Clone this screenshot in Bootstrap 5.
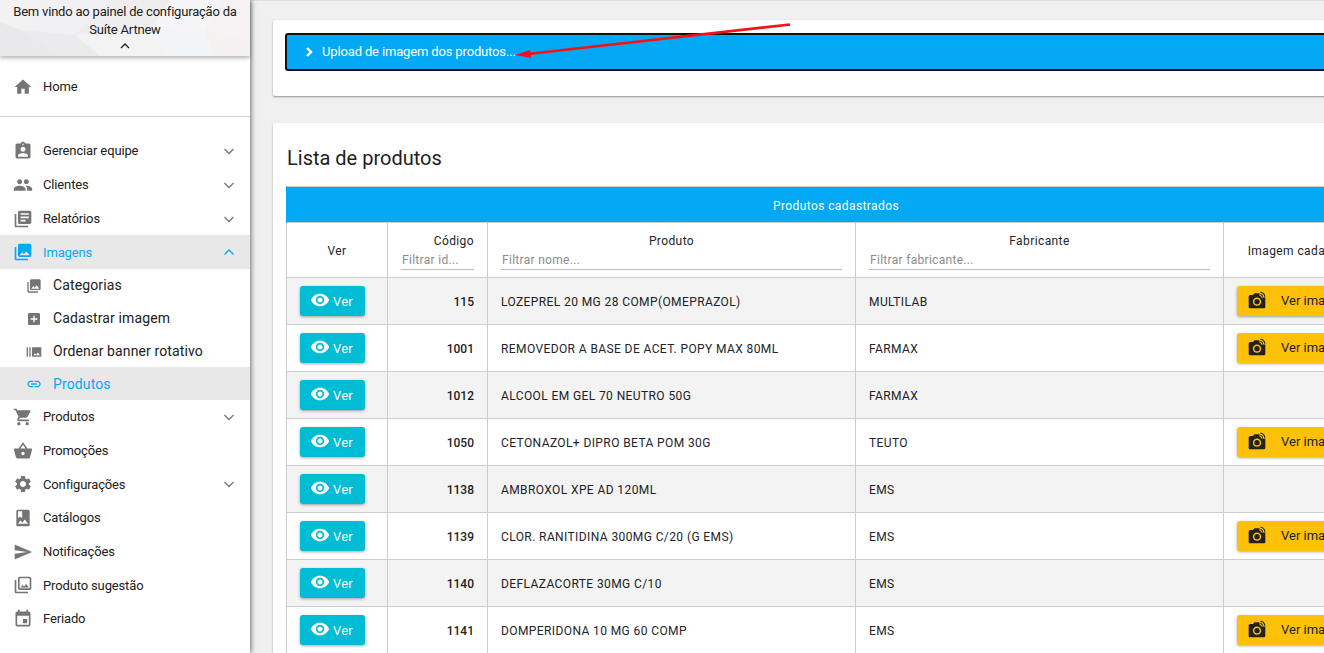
<!DOCTYPE html>
<html lang="pt-BR"><head><meta charset="utf-8"><title>Painel</title>
<link rel="stylesheet" href="https://cdn.jsdelivr.net/npm/bootstrap@5.3.0/dist/css/bootstrap.min.css">
<style>
html,body{height:653px;overflow:hidden}
body{font-family:Roboto,"Liberation Sans",sans-serif;background:#f0f0f0;color:#212121;font-size:13px}
.app-shell{height:653px;width:1324px;overflow:hidden}
.side-panel{width:250px;flex:none;height:653px;background:#fff;box-shadow:1px 0 5px rgba(0,0,0,.55);z-index:2}
.side-banner{height:56px;position:relative;overflow:hidden;text-align:center;line-height:18px;padding-top:3px;font-size:13px;letter-spacing:-.2px;background:#eeeeef;box-shadow:0 2px 4px rgba(0,0,0,.3)}
.side-banner svg.poly{position:absolute;inset:0}
.side-banner span,.side-banner svg.caret{position:relative}
.side-banner svg.caret{display:block;margin:0 auto}
.side-row{height:33.7px;display:flex;align-items:center;padding-left:13px;padding-right:14px;color:#212121;text-decoration:none;font-size:13px;letter-spacing:-.14px}
.side-row>svg.ic{width:20px;height:20px;fill:#757575;flex:none;margin-right:10px}
.side-row .chev{width:14px;height:14px;margin-left:auto;fill:none;stroke:#757575;stroke-width:1.3}
.side-sub{height:33px;padding-left:26px;font-size:14px;letter-spacing:.12px}
.side-sub>svg.ic{width:16px;height:16px;margin-right:11px}
.side-on{background:#e8e8e8;color:#03a9f4}
.side-on>svg.ic{fill:#03a9f4}
.side-on .chev{stroke:#03a9f4}
.side-sub.side-on{margin-top:-1px;padding-top:1px}
.side-rule{border:0;border-top:1px solid #d4d4d4;opacity:1;margin:12px 0 17.7px}
.home-row{margin-top:14px}
.main-zone{margin-left:23px;width:1126px;flex:none;padding-top:20px;position:relative}
.panel-box{background:#fff;border-radius:2px;box-shadow:0 1px 2px rgba(0,0,0,.4);padding:13px}
.upload-bar{height:38px;background:#03a9f4;border:2px solid #111;border-radius:3px;margin-left:-1px;color:#fff;font-size:13px;letter-spacing:-.15px;display:flex;align-items:center;padding-left:15px}
.upload-bar svg{width:14px;height:14px;margin-right:6px;fill:none;stroke:#fff;stroke-width:2.4}
.box-one{height:76px;margin-bottom:27px}
.list-title{font-size:20px;font-weight:400;line-height:24px;margin:10px 0 16px 1px}
.prod-table{width:1100px;margin:0;table-layout:fixed;font-size:12px;letter-spacing:.4px;--bs-table-striped-bg:#f3f3f3;--bs-table-border-color:#ccc;--bs-table-striped-color:#212121;border-color:#ccc}
.prod-table th,.prod-table td{padding:0 13px;vertical-align:middle;font-weight:400}
.prod-table thead tr.band th{background:#03a9f4;color:#fff;height:36px;padding-top:3px;text-align:center;font-size:12px;border-color:#03a9f4;box-shadow:none}
.prod-table thead tr.heads th{height:55px;padding-top:2px;font-size:12px;text-align:center}
.prod-table tbody td{height:47px}
.prod-table tbody td:nth-child(2),.prod-table tbody td:nth-child(3),.prod-table tbody td:nth-child(4){padding-top:2px}
.filter-in{display:block;width:100%;border:0;border-bottom:1px solid #bdbdbd;background:none;font-size:12px;letter-spacing:.3px;padding:0 1px;height:20px;outline:0}
.filter-in::placeholder{color:#8c8c8c}
.prod-table tbody .cell-code{text-align:right;font-weight:500;letter-spacing:0}
.btn-see{width:65px;height:30px;background:#00bcd4;color:#fff;border:0;border-radius:3px;font-size:13px;letter-spacing:.2px;padding:2px 0 0 10px;box-shadow:0 1px 3px rgba(0,0,0,.35);display:flex;align-items:center;gap:3px}
.btn-see svg{width:20px;height:20px;fill:#fff;margin-top:-5px}
.btn-photo{width:135px;height:30px;background:#ffc107;color:#212121;border:0;border-radius:3px;font-size:13px;padding:0 0 0 10px;box-shadow:0 1px 3px rgba(0,0,0,.35);display:flex;align-items:center;gap:14px;white-space:nowrap}
.btn-photo svg{width:20px;height:20px;fill:#212121;flex:none;margin-top:-3px}
.mark-arrow{position:absolute;left:0;top:0;width:1324px;height:100px;z-index:3;pointer-events:none}
.top-edge{position:absolute;left:0;top:0;width:1324px;height:1px;background:#ddd}
</style></head><body>
<svg width="0" height="0" class="position-absolute"><defs>
<symbol id="i-home" viewBox="0 0 24 24"><path d="M10 20v-6h4v6h5v-8h3L12 3 2 12h3v8z"/></symbol>
<symbol id="i-team" viewBox="0 0 24 24"><path d="M19 3h-4.18C14.4 1.84 13.3 1 12 1c-1.3 0-2.4.84-2.82 2H5c-1.1 0-2 .9-2 2v14c0 1.1.9 2 2 2h14c1.1 0 2-.9 2-2V5c0-1.1-.9-2-2-2zm-7 0c.55 0 1 .45 1 1s-.45 1-1 1-1-.45-1-1 .45-1 1-1zm0 4c1.66 0 3 1.34 3 3s-1.34 3-3 3-3-1.34-3-3 1.34-3 3-3zm6 12H6v-1.4c0-2 4-3.1 6-3.1s6 1.1 6 3.1V19z"/></symbol>
<symbol id="i-people" viewBox="0 0 24 24"><path d="M16 11c1.66 0 2.99-1.34 2.99-3S17.66 5 16 5c-1.66 0-3 1.34-3 3s1.34 3 3 3zm-8 0c1.66 0 2.99-1.34 2.99-3S9.66 5 8 5C6.34 5 5 6.34 5 8s1.34 3 3 3zm0 2c-2.33 0-7 1.17-7 3.5V19h14v-2.5c0-2.33-4.67-3.5-7-3.5zm8 0c-.29 0-.62.02-.97.05 1.16.84 1.97 1.97 1.97 3.45V19h6v-2.5c0-2.33-4.67-3.5-7-3.5z"/></symbol>
<symbol id="i-books" viewBox="0 0 24 24"><path d="M4 6H2v14c0 1.1.9 2 2 2h14v-2H4V6zm16-4H8c-1.1 0-2 .9-2 2v12c0 1.1.9 2 2 2h12c1.1 0 2-.9 2-2V4c0-1.1-.9-2-2-2zm-1 9H9V9h10v2zm-4 4H9v-2h6v2zm4-8H9V5h10v2z"/></symbol>
<symbol id="i-photos" viewBox="0 0 24 24"><path d="M22 16V4c0-1.1-.9-2-2-2H8c-1.1 0-2 .9-2 2v12c0 1.1.9 2 2 2h12c1.1 0 2-.9 2-2zm-11-4l2.03 2.71L16 11l4 5H8l3-4zM2 6v14c0 1.1.9 2 2 2h14v-2H4V6H2z"/></symbol>
<symbol id="i-add" viewBox="0 0 24 24"><path d="M19 3H5c-1.11 0-2 .9-2 2v14c0 1.1.89 2 2 2h14c1.1 0 2-.9 2-2V5c0-1.1-.9-2-2-2zm-2 10h-4v4h-2v-4H7v-2h4V7h2v4h4v2z"/></symbol>
<symbol id="i-burst" viewBox="0 0 24 24"><path d="M1 5h2v14H1zm4 0h2v14H5zm17 0H10c-.55 0-1 .45-1 1v12c0 .55.45 1 1 1h12c.55 0 1-.45 1-1V6c0-.55-.45-1-1-1zM11 17l2.5-3.15L15.29 16l2.5-3.22L21 17H11z"/></symbol>
<symbol id="i-link" viewBox="0 0 24 24"><path d="M3.9 12c0-1.71 1.39-3.1 3.1-3.1h4V7H7c-2.76 0-5 2.24-5 5s2.24 5 5 5h4v-1.9H7c-1.71 0-3.1-1.39-3.1-3.1zM8 13h8v-2H8v2zm9-6h-4v1.9h4c1.71 0 3.1 1.39 3.1 3.1s-1.39 3.1-3.1 3.1h-4V17h4c2.76 0 5-2.24 5-5s-2.24-5-5-5z"/></symbol>
<symbol id="i-cart" viewBox="0 0 24 24"><path d="M7 18c-1.1 0-1.99.9-1.99 2S5.9 22 7 22s2-.9 2-2-.9-2-2-2zM1 2v2h2l3.6 7.59-1.35 2.45c-.16.28-.25.61-.25.96 0 1.1.9 2 2 2h12v-2H7.42c-.14 0-.25-.11-.25-.25l.03-.12.9-1.63h7.45c.75 0 1.41-.41 1.75-1.03l3.58-6.49c.08-.14.12-.31.12-.48 0-.55-.45-1-1-1H5.21l-.94-2H1zm16 16c-1.1 0-1.99.9-1.99 2s.89 2 1.99 2 2-.9 2-2-.9-2-2-2z"/></symbol>
<symbol id="i-basket" viewBox="0 0 24 24"><path d="M17.21 9l-4.38-6.56c-.19-.28-.51-.42-.83-.42-.32 0-.64.14-.83.43L6.79 9H2c-.55 0-1 .45-1 1 0 .09.01.18.04.27l2.54 9.27c.23.84 1 1.46 1.92 1.46h13c.92 0 1.69-.62 1.93-1.46l2.54-9.27L23 10c0-.55-.45-1-1-1h-4.79zM9 9l3-4.4L15 9H9zm3 8c-1.1 0-2-.9-2-2s.9-2 2-2 2 .9 2 2-.9 2-2 2z"/></symbol>
<symbol id="i-gear" viewBox="0 0 24 24"><path d="M19.14 12.94c.04-.3.06-.61.06-.94 0-.32-.02-.64-.07-.94l2.03-1.58c.18-.14.23-.41.12-.61l-1.92-3.32c-.12-.22-.37-.29-.59-.22l-2.39.96c-.5-.38-1.03-.7-1.62-.94l-.36-2.54c-.04-.24-.24-.41-.48-.41h-3.84c-.24 0-.43.17-.47.41l-.36 2.54c-.59.24-1.13.57-1.62.94l-2.39-.96c-.22-.08-.47 0-.59.22L2.74 8.87c-.12.21-.08.47.12.61l2.03 1.58c-.05.3-.09.63-.09.94s.02.64.07.94l-2.03 1.58c-.18.14-.23.41-.12.61l1.92 3.32c.12.22.37.29.59.22l2.39-.96c.5.38 1.03.7 1.62.94l.36 2.54c.05.24.24.41.48.41h3.84c.24 0 .44-.17.47-.41l.36-2.54c.59-.24 1.13-.56 1.62-.94l2.39.96c.22.08.47 0 .59-.22l1.92-3.32c.12-.22.07-.47-.12-.61l-2.01-1.58zM12 15.6c-1.98 0-3.6-1.62-3.6-3.6s1.62-3.6 3.6-3.6 3.6 1.62 3.6 3.6-1.62 3.6-3.6 3.6z"/></symbol>
<symbol id="i-album" viewBox="0 0 24 24"><path d="M18 2H6c-1.1 0-2 .9-2 2v16c0 1.1.9 2 2 2h12c1.1 0 2-.9 2-2V4c0-1.1-.9-2-2-2zM6 4h5v8l-2.5-1.5L6 12V4zm0 15l3-3.86 2.14 2.58 3-3.86L18 19H6z"/></symbol>
<symbol id="i-send" viewBox="0 0 24 24"><path d="M2.01 21L23 12 2.01 3 2 10l15 2-15 2z"/></symbol>
<symbol id="i-photoline" viewBox="0 0 24 24"><path d="M20 4v12H8V4h12m0-2H8c-1.1 0-2 .9-2 2v12c0 1.1.9 2 2 2h12c1.1 0 2-.9 2-2V4c0-1.1-.9-2-2-2zm-8.5 9.67l1.69 2.26 2.48-3.1L19 15H9zM2 6v14c0 1.1.9 2 2 2h14v-2H4V6H2z"/></symbol>
<symbol id="i-event" viewBox="0 0 24 24"><path d="M17 12h-5v5h5v-5zM16 1v2H8V1H6v2H5c-1.11 0-1.99.9-1.99 2L3 19c0 1.1.89 2 2 2h14c1.1 0 2-.9 2-2V5c0-1.1-.9-2-2-2h-1V1h-2zm3 18H5V8h14v11z"/></symbol>
<symbol id="i-eye" viewBox="0 0 24 24"><path d="M12 4.5C7 4.5 2.73 7.61 1 12c1.73 4.39 6 7.5 11 7.5s9.27-3.11 11-7.5c-1.73-4.39-6-7.5-11-7.5zM12 17c-2.76 0-5-2.24-5-5s2.24-5 5-5 5 2.24 5 5-2.24 5-5 5zm0-8c-1.66 0-3 1.34-3 3s1.34 3 3 3 3-1.34 3-3-1.34-3-3-3z"/></symbol>
<symbol id="i-cam" viewBox="0 0 24 24"><circle cx="12" cy="14" r="3.2"/><path d="M16 3.33c2.58 0 4.67 2.09 4.67 4.67H22c0-3.31-2.69-6-6-6v1.33M16 6c1.11 0 2 .89 2 2h1.33c0-1.84-1.49-3.33-3.33-3.33V6"/><path d="M17 9c0-1.11-.89-2-2-2V4H9L7.17 6H4c-1.1 0-2 .9-2 2v12c0 1.1.9 2 2 2h16c1.1 0 2-.9 2-2V9h-5zm-5 10c-2.76 0-5-2.24-5-5s2.24-5 5-5 5 2.24 5 5-2.24 5-5 5z"/></symbol>
<symbol id="i-chev" viewBox="0 0 14 14"><path d="M2.5 5l4.5 4.5L11.5 5"/></symbol>
<symbol id="i-up" viewBox="0 0 14 14"><path d="M2.5 9.5L7 5l4.5 4.5"/></symbol>
</defs></svg>
<div class="app-shell d-flex position-relative">
<div class="top-edge"></div>
<aside class="side-panel">
<div class="side-banner">
<svg class="poly" width="250" height="56" viewBox="0 0 250 56"><polygon points="0,0 45,0 20,30 0,22" fill="#f4f1f3"/><polygon points="45,0 110,0 75,35 20,30" fill="#f1f0f2"/><polygon points="0,22 20,30 60,56 0,56" fill="#e9e9eb"/><polygon points="20,30 75,35 100,56 60,56" fill="#ebebed"/><polygon points="110,0 170,0 150,30 75,35" fill="#eeeeef"/><polygon points="75,35 150,30 165,56 100,56" fill="#f3f3f4"/><polygon points="170,0 225,0 205,32 150,30" fill="#f5f4f6"/><polygon points="150,30 205,32 215,56 165,56" fill="#f2f5f7"/><polygon points="225,0 250,0 250,40 205,32" fill="#f6f2f3"/><polygon points="205,32 250,40 250,56 215,56" fill="#f5f1f1"/></svg>
<span>Bem vindo ao painel de configuração da<br>Suíte Artnew</span>
<svg class="caret" width="14" height="14" viewBox="0 0 14 14" fill="none" stroke="#212121" stroke-width="1.3"><path d="M3 9l4-4 4 4"/></svg>
</div>
<nav class="d-flex flex-column">
<a class="side-row home-row" href="#"><svg class="ic"><use href="#i-home"/></svg>Home</a>
<hr class="side-rule">
<a class="side-row" href="#"><svg class="ic"><use href="#i-team"/></svg>Gerenciar equipe<svg class="chev"><use href="#i-chev"/></svg></a>
<a class="side-row" href="#"><svg class="ic"><use href="#i-people"/></svg>Clientes<svg class="chev"><use href="#i-chev"/></svg></a>
<a class="side-row" href="#"><svg class="ic"><use href="#i-books"/></svg>Relatórios<svg class="chev"><use href="#i-chev"/></svg></a>
<a class="side-row side-on" href="#"><svg class="ic"><use href="#i-photos"/></svg>Imagens<svg class="chev"><use href="#i-up"/></svg></a>
<a class="side-row side-sub" href="#"><svg class="ic"><use href="#i-photos"/></svg>Categorias</a>
<a class="side-row side-sub" href="#"><svg class="ic"><use href="#i-add"/></svg>Cadastrar imagem</a>
<a class="side-row side-sub" href="#"><svg class="ic"><use href="#i-burst"/></svg>Ordenar banner rotativo</a>
<a class="side-row side-sub side-on" href="#"><svg class="ic"><use href="#i-link"/></svg>Produtos</a>
<a class="side-row" href="#"><svg class="ic"><use href="#i-cart"/></svg>Produtos<svg class="chev"><use href="#i-chev"/></svg></a>
<a class="side-row" href="#"><svg class="ic"><use href="#i-basket"/></svg>Promoções</a>
<a class="side-row" href="#"><svg class="ic"><use href="#i-gear"/></svg>Configurações<svg class="chev"><use href="#i-chev"/></svg></a>
<a class="side-row" href="#"><svg class="ic"><use href="#i-album"/></svg>Catálogos</a>
<a class="side-row" href="#"><svg class="ic"><use href="#i-send"/></svg>Notificações</a>
<a class="side-row" href="#"><svg class="ic"><use href="#i-photoline"/></svg>Produto sugestão</a>
<a class="side-row" href="#"><svg class="ic"><use href="#i-event"/></svg>Feriado</a>
</nav>
</aside>
<main class="main-zone">
<section class="panel-box box-one">
<div class="upload-bar"><svg viewBox="0 0 14 14"><path d="M5 3l4 4-4 4"/></svg>Upload de imagem dos produtos...</div>
</section>
<section class="panel-box">
<h2 class="list-title">Lista de produtos</h2>
<table class="table table-bordered table-striped prod-table">
<colgroup><col style="width:101px"><col style="width:100px"><col style="width:368px"><col style="width:368px"><col></colgroup>
<thead>
<tr class="band"><th colspan="5">Produtos cadastrados</th></tr>
<tr class="heads"><th>Ver</th><th class="text-end">Código<input class="filter-in" placeholder="Filtrar id..."></th><th>Produto<input class="filter-in" placeholder="Filtrar nome..."></th><th>Fabricante<input class="filter-in" placeholder="Filtrar fabricante..."></th><th>Imagem cadastrada</th></tr>
</thead>
<tbody>
<tr><td><button class="btn btn-see"><svg><use href="#i-eye"/></svg>Ver</button></td><td class="cell-code">115</td><td>LOZEPREL 20 MG 28 COMP(OMEPRAZOL)</td><td>MULTILAB</td><td><button class="btn btn-photo"><svg><use href="#i-cam"/></svg><span>Ver imagem</span></button></td></tr>
<tr><td><button class="btn btn-see"><svg><use href="#i-eye"/></svg>Ver</button></td><td class="cell-code">1001</td><td>REMOVEDOR A BASE DE ACET. POPY MAX 80ML</td><td>FARMAX</td><td><button class="btn btn-photo"><svg><use href="#i-cam"/></svg><span>Ver imagem</span></button></td></tr>
<tr><td><button class="btn btn-see"><svg><use href="#i-eye"/></svg>Ver</button></td><td class="cell-code">1012</td><td>ALCOOL EM GEL 70 NEUTRO 50G</td><td>FARMAX</td><td></td></tr>
<tr><td><button class="btn btn-see"><svg><use href="#i-eye"/></svg>Ver</button></td><td class="cell-code">1050</td><td>CETONAZOL+ DIPRO BETA POM 30G</td><td>TEUTO</td><td><button class="btn btn-photo"><svg><use href="#i-cam"/></svg><span>Ver imagem</span></button></td></tr>
<tr><td><button class="btn btn-see"><svg><use href="#i-eye"/></svg>Ver</button></td><td class="cell-code">1138</td><td>AMBROXOL XPE AD 120ML</td><td>EMS</td><td></td></tr>
<tr><td><button class="btn btn-see"><svg><use href="#i-eye"/></svg>Ver</button></td><td class="cell-code">1139</td><td>CLOR. RANITIDINA 300MG C/20 (G EMS)</td><td>EMS</td><td><button class="btn btn-photo"><svg><use href="#i-cam"/></svg><span>Ver imagem</span></button></td></tr>
<tr><td><button class="btn btn-see"><svg><use href="#i-eye"/></svg>Ver</button></td><td class="cell-code">1140</td><td>DEFLAZACORTE 30MG C/10</td><td>EMS</td><td></td></tr>
<tr><td><button class="btn btn-see"><svg><use href="#i-eye"/></svg>Ver</button></td><td class="cell-code">1141</td><td>DOMPERIDONA 10 MG 60 COMP</td><td>EMS</td><td><button class="btn btn-photo"><svg><use href="#i-cam"/></svg><span>Ver imagem</span></button></td></tr>
</tbody>
</table>
</section>
</main>
<svg class="mark-arrow" viewBox="0 0 1324 100"><path d="M790 24.5L528 54" stroke="#f5101a" stroke-width="2.6" fill="none"/><polygon points="515,55 530,50 531,58" fill="#f5101a"/></svg>
</div>
</body></html>
